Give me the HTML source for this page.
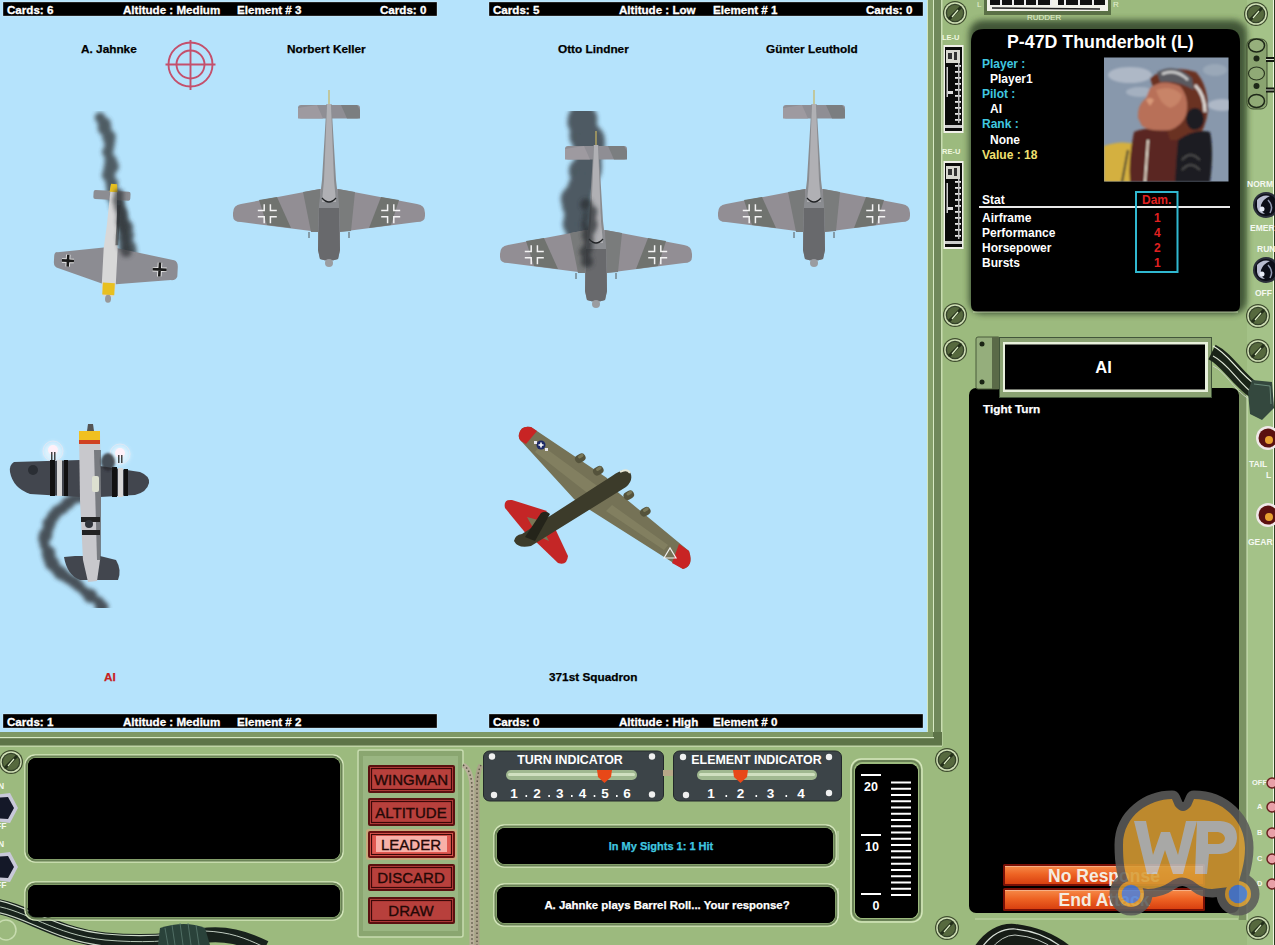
<!DOCTYPE html>
<html><head><meta charset="utf-8">
<style>
*{margin:0;padding:0;box-sizing:border-box}
html,body{width:1275px;height:945px;overflow:hidden;background:#9cba7e;font-family:"Liberation Sans",sans-serif}
svg{position:absolute;left:0;top:0}
text{font-family:"Liberation Sans",sans-serif}
</style></head><body>
<svg width="1275" height="945" viewBox="0 0 1275 945">
<defs>
  <g id="screw">
    <circle r="12" fill="#3e4c2e"/>
    <circle r="10.8" fill="#d0e0b6"/>
    <circle r="9.3" fill="#34422a"/>
    <circle r="8" fill="#56693e"/>
    <path d="M-6 6 L6 -6" stroke="#24301a" stroke-width="3"/>
    <path d="M-3 4 L3 -3" stroke="#e0f0c8" stroke-width="1.2"/>
  </g>
  <filter id="blur2" x="-50%" y="-50%" width="200%" height="200%"><feGaussianBlur stdDeviation="2"/></filter>
  <filter id="blur3" x="-50%" y="-50%" width="200%" height="200%"><feGaussianBlur stdDeviation="3"/></filter>
  <filter id="blur1" x="-50%" y="-50%" width="200%" height="200%"><feGaussianBlur stdDeviation="1"/></filter>
</defs>

<!-- base green -->
<rect x="0" y="0" width="1275" height="945" fill="#9cba7e"/>
<rect x="1247" y="0" width="28" height="945" fill="#a4c288"/>

<!-- sky -->
<rect x="0" y="0" width="927" height="732" fill="#b5e3fc"/>

<!-- frame strips right -->
<rect x="927" y="0" width="15" height="746" fill="#70885a"/>
<rect x="927" y="0" width="6" height="737" fill="#86a06a"/>
<rect x="927" y="0" width="1" height="732" fill="#d4e6c0"/>
<rect x="933" y="0" width="1" height="738" fill="#d8eac4"/>
<rect x="941" y="0" width="1.5" height="746" fill="#c8dcb0"/>
<!-- frame strips bottom -->
<rect x="0" y="732" width="942" height="14" fill="#5e7448"/>
<rect x="0" y="732" width="933" height="5" fill="#7e9864"/>
<rect x="0" y="737" width="934" height="1.2" fill="#d8eac4"/>
<rect x="0" y="745.5" width="942" height="1.5" fill="#c0d4a6"/>
<!-- right-edge channel -->
<rect x="1239" y="390" width="8" height="530" fill="#7a9262"/>
<rect x="1246.5" y="390" width="1" height="530" fill="#d6e8c0"/>
<rect x="1273" y="0" width="1" height="945" fill="#eef6e0"/>
<rect x="1274" y="0" width="1" height="945" fill="#2a3a20"/>

<!-- black panels right -->
<rect x="969" y="20" width="278" height="294" rx="14" fill="#33452a" opacity="0.85" filter="url(#blur3)"/>
<path d="M984 29 L1227 29 Q1240 29 1240 42 L1240 305 Q1240 312 1233 312 L978 312 Q971 312 971 305 L971 42 Q971 29 984 29Z" fill="#000"/>
<path d="M973 312 L1238 312" stroke="#d0e2b8" stroke-width="1.2" opacity="0.8"/>
<rect x="969" y="388" width="270" height="525" rx="7" fill="#000"/>

<!-- bottom black boxes -->
<rect x="28" y="758" width="312" height="101" rx="8" fill="#000"/>
<rect x="28" y="885" width="312" height="32" rx="8" fill="#000"/>
<rect x="497" y="828" width="336" height="36" rx="8" fill="#000"/>
<rect x="497" y="887" width="338" height="36" rx="8" fill="#000"/>
<rect x="855" y="764" width="63" height="154" rx="8" fill="#000"/>

<!-- screws -->
<use href="#screw" x="955" y="13"/>
<use href="#screw" x="1256" y="14"/>
<use href="#screw" x="955" y="315"/>
<use href="#screw" x="955" y="350"/>
<use href="#screw" x="1258" y="316"/>
<use href="#screw" x="1258" y="351"/>
<use href="#screw" x="947" y="760"/>
<use href="#screw" x="947" y="928"/>
<use href="#screw" x="1258" y="928"/>
<use href="#screw" x="11" y="762"/>


<!-- ===== PLANES ===== -->
<defs>
  <g id="fw190">
    <line x1="0" y1="0" x2="0" y2="16" stroke="#c8b460" stroke-width="1.2"/>
    <path d="M-28 15 L28 15 Q31 15 31 18 L31 26 Q31 28.5 28 28.5 L-28 28.5 Q-31 28.5 -31 26 L-31 18 Q-31 15 -28 15Z" fill="#8f8e94"/>
    <path d="M-31 18 L-12 15 L-6 28.5 L-31 28.5Z" fill="#9e9aa0"/>
    <path d="M12 15 L28 15 L31 20 L31 28.5 L18 28.5Z" fill="#7b7e80"/>
    <path d="M-96 123 Q-96 115 -88 114 L-9 99 L9 99 L88 114 Q96 115 96 123 L96 126 Q96 132 88 132 L10 142 L-10 142 L-88 132 Q-96 132 -96 126Z" fill="#928e94"/>
    <path d="M-70 110 L-52 107 L-38 138 L-62 135 Z" fill="#70736f"/>
    <path d="M-26 102 L-9 99 L-9 142 L-18 142Z" fill="#787a7a"/>
    <path d="M52 107 L70 110 L62 135 L40 138Z" fill="#70736f"/>
    <path d="M9 99 L26 102 L22 141 L10 142Z" fill="#7a7c7c"/>
    <path d="M-2.5 14 L2.5 14 L4 40 L7 90 L10 115 L11 135 L11 160 L9 169 Q0 172 -9 169 L-11 160 L-11 135 L-10 115 L-7 90 L-4 40Z" fill="#8a8c90"/>
    <path d="M-2 14 L2 14 L3 40 L5 90 L7 112 L-7 112 L-5 90 L-3 40Z" fill="#b0b0b4"/>
    <path d="M-7 108 Q0 116 7 108" stroke="#202224" stroke-width="1.3" fill="none"/>
    <path d="M-10 118 L10 118 L11 160 L9 169 Q0 172 -9 169 L-11 160Z" fill="#68696c"/>
    <ellipse cx="0" cy="173" rx="4" ry="4" fill="#9a9ca0"/>
    <path d="M-64.8 114.2 L-64.8 120.60000000000001 L-71.2 120.60000000000001 M-58.6 114.2 L-58.6 120.60000000000001 L-52.2 120.60000000000001 M-64.8 133.2 L-64.8 126.8 L-71.2 126.8 M-58.6 133.2 L-58.6 126.8 L-52.2 126.8 M58.6 114.2 L58.6 120.60000000000001 L52.2 120.60000000000001 M64.8 114.2 L64.8 120.60000000000001 L71.2 120.60000000000001 M58.6 133.2 L58.6 126.8 L52.2 126.8 M64.8 133.2 L64.8 126.8 L71.2 126.8" stroke="#f4f4f4" stroke-width="1.5" fill="none"/>
    <line x1="-20" y1="142" x2="-20" y2="148" stroke="#555" stroke-width="1"/>
    <line x1="20" y1="142" x2="20" y2="148" stroke="#555" stroke-width="1"/>
  </g>
</defs>

<!-- smoke Lindner -->
<clipPath id="clipL"><rect x="540" y="111" width="100" height="170"/></clipPath><g clip-path="url(#clipL)"><g fill="#34383c" opacity="0.8" filter="url(#blur2)"><circle cx="582.6" cy="119.2" r="14.7"/><circle cx="580.6" cy="122.3" r="13.2"/><circle cx="582.2" cy="128.2" r="11.3"/><circle cx="585.2" cy="124.7" r="11.5"/><circle cx="586.7" cy="137.0" r="11.5"/><circle cx="585.1" cy="135.4" r="15.7"/><circle cx="589.1" cy="139.7" r="15.6"/><circle cx="584.9" cy="143.4" r="12.2"/><circle cx="586.2" cy="143.7" r="12.1"/><circle cx="591.6" cy="144.2" r="13.4"/><circle cx="590.1" cy="151.9" r="13.0"/><circle cx="585.5" cy="149.4" r="11.4"/><circle cx="589.8" cy="158.6" r="11.7"/><circle cx="589.0" cy="158.8" r="11.6"/><circle cx="589.4" cy="166.9" r="11.1"/><circle cx="587.6" cy="165.5" r="14.1"/><circle cx="587.1" cy="169.8" r="14.3"/><circle cx="582.2" cy="170.9" r="13.3"/><circle cx="580.3" cy="177.6" r="9.8"/><circle cx="584.5" cy="179.8" r="12.2"/><circle cx="584.0" cy="182.4" r="12.5"/><circle cx="581.7" cy="184.5" r="11.5"/><circle cx="581.6" cy="193.7" r="11.3"/><circle cx="580.2" cy="186.6" r="12.3"/><circle cx="578.4" cy="200.2" r="12.6"/><circle cx="575.5" cy="195.4" r="11.9"/><circle cx="572.1" cy="202.2" r="9.6"/><circle cx="572.9" cy="198.9" r="12.1"/><circle cx="572.4" cy="206.6" r="10.3"/><circle cx="578.3" cy="205.3" r="10.6"/><circle cx="575.8" cy="217.9" r="11.8"/><circle cx="578.3" cy="213.1" r="10.2"/><circle cx="574.9" cy="224.1" r="12.1"/><circle cx="573.3" cy="218.5" r="9.3"/><circle cx="575.2" cy="227.1" r="10.5"/><circle cx="575.4" cy="223.3" r="9.8"/><circle cx="577.8" cy="234.0" r="11.6"/><circle cx="580.4" cy="233.6" r="10.4"/><circle cx="582.1" cy="236.1" r="11.2"/><circle cx="582.9" cy="242.6" r="10.8"/><circle cx="581.6" cy="245.0" r="8.0"/><circle cx="583.5" cy="242.3" r="7.9"/><circle cx="581.6" cy="249.3" r="8.7"/><circle cx="580.4" cy="248.0" r="8.0"/></g></g>
<use href="#fw190" x="329" y="90"/>
<use href="#fw190" x="814" y="90"/>
<use href="#fw190" x="596" y="131"/>
<!-- smoke over Lindner fuselage -->
<g fill="#2a2e32" opacity="0.75" filter="url(#blur2)"><circle cx="586.4" cy="204.5" r="6.1"/><circle cx="591.1" cy="211.6" r="6.2"/><circle cx="589.7" cy="216.6" r="6.6"/><circle cx="589.5" cy="224.7" r="8.0"/><circle cx="590.2" cy="229.4" r="5.5"/><circle cx="587.5" cy="234.9" r="5.8"/><circle cx="588.7" cy="240.3" r="5.1"/><circle cx="587.8" cy="247.9" r="5.2"/><circle cx="585.3" cy="252.0" r="5.8"/><circle cx="587.0" cy="261.5" r="6.0"/></g>

<!-- Bf109 Jahnke -->
<clipPath id="clipJ"><rect x="60" y="111" width="100" height="160"/></clipPath><g clip-path="url(#clipJ)"><g fill="#363a3e" opacity="0.8" filter="url(#blur2)"><circle cx="100.0" cy="117.5" r="5.3"/><circle cx="104.3" cy="124.0" r="6.7"/><circle cx="104.6" cy="128.5" r="6.8"/><circle cx="109.0" cy="136.9" r="6.8"/><circle cx="109.6" cy="142.3" r="5.5"/><circle cx="109.3" cy="146.6" r="5.1"/><circle cx="107.8" cy="152.1" r="5.7"/><circle cx="110.6" cy="160.6" r="6.2"/><circle cx="111.5" cy="166.6" r="7.4"/><circle cx="109.1" cy="169.3" r="5.7"/><circle cx="108.6" cy="175.1" r="6.7"/><circle cx="111.8" cy="183.4" r="6.4"/><circle cx="111.7" cy="189.1" r="5.5"/><circle cx="113.0" cy="195.4" r="7.2"/><circle cx="115.1" cy="199.5" r="5.8"/><circle cx="117.3" cy="204.7" r="7.4"/><circle cx="120.2" cy="210.8" r="6.4"/><circle cx="122.3" cy="217.9" r="5.9"/><circle cx="121.1" cy="221.5" r="7.8"/><circle cx="125.6" cy="227.3" r="7.6"/><circle cx="127.7" cy="235.2" r="6.4"/><circle cx="126.8" cy="238.9" r="5.6"/><circle cx="129.0" cy="246.8" r="7.0"/><circle cx="129.0" cy="251.7" r="7.9"/></g></g>
<g transform="translate(114 185) rotate(3)">
  <rect x="-20" y="6" width="37" height="9" rx="2" fill="#8c8d92"/>
  <path d="M-53 70 L-7 63 L7 63 L64 72 Q68 73 68 79 L68 88 Q67 92 62 92 L7 99 L-7 99 L-51 86 Q-56 85 -56 80 L-56 74 Q-56 70 -53 70Z" fill="#8c8c92"/>
  <path d="M-3 0 L3 0 L5 40 L7 64 L7 100 L5 112 L-5 112 L-7 100 L-7 64 L-5 40Z" fill="#d8d8d8"/>
  <path d="M-3 -1 L3 -1 L4 7 L-4 7Z" fill="#e8c020"/>
  <path d="M-6 98 L6 98 L6 110 L-6 110Z" fill="#e8c020"/>
  <ellipse cx="0" cy="114" rx="3" ry="4" fill="#999"/>
  <g stroke="#e8e8e8" stroke-width="4.5"><path d="M-42 72 L-42 84 M-48 78 L-36 78"/><path d="M50 75 L50 89 M43 82 L57 82"/></g><g stroke="#1a1a1a" stroke-width="2.6"><path d="M-42 72 L-42 84 M-48 78 L-36 78"/><path d="M50 75 L50 89 M43 82 L57 82"/></g>
  <path d="M6 20 L6 60" stroke="#333" stroke-width="3" opacity="0.6"/>
</g>
<g fill="#2e3236" opacity="0.7" filter="url(#blur2)"><circle cx="119.0" cy="194.1" r="5.0"/><circle cx="118.3" cy="200.6" r="5.7"/><circle cx="119.1" cy="207.4" r="4.8"/><circle cx="121.9" cy="213.6" r="5.5"/><circle cx="121.8" cy="221.5" r="5.4"/><circle cx="123.7" cy="226.7" r="5.6"/><circle cx="123.4" cy="231.6" r="5.4"/><circle cx="123.3" cy="237.8" r="6.2"/><circle cx="124.1" cy="245.6" r="6.0"/><circle cx="126.2" cy="251.5" r="5.6"/></g>

<!-- P-47 -->
<clipPath id="clipP"><rect x="0" y="490" width="200" height="118"/></clipPath><g clip-path="url(#clipP)"><g fill="#34383c" opacity="0.85" filter="url(#blur2)"><circle cx="80.2" cy="497.9" r="5.1"/><circle cx="73.6" cy="498.8" r="5.5"/><circle cx="68.1" cy="503.0" r="6.2"/><circle cx="62.5" cy="508.2" r="5.9"/><circle cx="57.2" cy="511.5" r="6.0"/><circle cx="53.2" cy="516.4" r="6.1"/><circle cx="49.2" cy="523.3" r="6.5"/><circle cx="48.0" cy="529.1" r="5.5"/><circle cx="45.6" cy="535.1" r="6.8"/><circle cx="44.0" cy="538.7" r="5.9"/><circle cx="44.6" cy="545.2" r="5.0"/><circle cx="48.5" cy="552.9" r="6.9"/><circle cx="49.2" cy="557.8" r="6.4"/><circle cx="52.0" cy="563.2" r="7.1"/><circle cx="55.6" cy="568.1" r="5.8"/><circle cx="60.3" cy="572.7" r="6.8"/><circle cx="63.7" cy="575.3" r="6.0"/><circle cx="68.8" cy="578.7" r="5.6"/><circle cx="74.7" cy="582.2" r="6.1"/><circle cx="78.8" cy="586.0" r="5.6"/><circle cx="84.2" cy="591.3" r="5.0"/><circle cx="90.2" cy="595.8" r="7.1"/><circle cx="92.2" cy="598.0" r="5.0"/><circle cx="98.7" cy="601.6" r="5.2"/><circle cx="101.8" cy="607.2" r="6.7"/></g></g>
<g>
  <circle cx="53" cy="452" r="10" fill="#fff" opacity="0.55" filter="url(#blur2)"/>
  <circle cx="120" cy="455" r="10" fill="#fff" opacity="0.55" filter="url(#blur2)"/>
  <circle cx="53" cy="451" r="10" fill="none" stroke="#f0e8f0" stroke-width="1" opacity="0.6"/>
  <circle cx="120" cy="454" r="10" fill="none" stroke="#f0e8f0" stroke-width="1" opacity="0.6"/>
  <circle cx="53" cy="450" r="5" fill="#fff0f8"/>
  <circle cx="120" cy="453" r="5" fill="#fff0f8"/>
  <rect x="51" y="452" width="1.5" height="8" fill="#444"/><rect x="54" y="452" width="1.5" height="8" fill="#444"/>
  <rect x="118" y="455" width="1.5" height="8" fill="#444"/><rect x="121" y="455" width="1.5" height="8" fill="#444"/>
  <path d="M14 462 Q9 465 10 472 Q13 488 30 494 L80 497 L80 460Z" fill="#42464e"/>
  <path d="M100 466 L140 472 Q150 476 149 483 Q147 492 135 495 L100 497Z" fill="#42464e"/>
  <g fill="#111"><rect x="50" y="460" width="5" height="36"/><rect x="64" y="460" width="4" height="36"/><rect x="112" y="467" width="5" height="30"/><rect x="124" y="469" width="4" height="27"/></g>
  <g fill="#d8d8d8"><rect x="57" y="460" width="5" height="36"/><rect x="118" y="468" width="5" height="29"/></g>
  <circle cx="33" cy="470" r="5" fill="#2a2e34"/>
  <path d="M64 557 Q67 575 80 580 L118 580 Q122 570 116 560 L100 556 L75 556Z" fill="#42464e"/>
  <path d="M79 433 L100 433 L101 500 L100 560 L97 581 L88 582 L83 560 L80 500Z" fill="#c8c8cc"/>
  <path d="M94 450 L101 450 L101 560 L97 560Z" fill="#555a60" opacity="0.7"/>
  <rect x="79" y="431" width="21" height="9" fill="#f0c020"/>
  <rect x="79" y="440" width="21" height="4" fill="#d04020"/>
  <path d="M88 424 L93 424 L94 431 L87 431Z" fill="#555"/>
  <rect x="81" y="517" width="19" height="5" fill="#222"/>
  <rect x="82" y="530" width="18" height="5" fill="#222"/>
  <circle cx="89" cy="524" r="4" fill="#30343a"/>
  <rect x="92" y="476" width="7" height="16" rx="2" fill="#dde0d0"/>
  <ellipse cx="108" cy="462" rx="7" ry="9" fill="#2a2a2e" opacity="0.8" filter="url(#blur1)"/>
</g>

<!-- B-17 -->
<g>
  <path d="M519 434 Q521 425 531 427 L607 478 L614 489 L689 551 Q694 566 683 569 L590 510 L574 499 L521 441 Q518 438 519 434Z" fill="#757256"/>
  <path d="M541 445 L600 488 L590 495 L535 452Z" fill="#8a8868" opacity="0.6"/>
  <path d="M612 505 L668 545 L664 550 L606 511Z" fill="#8a8868" opacity="0.6"/>
  <path d="M519 434 Q521 425 531 427 L537 431 L526 444 L521 441 Q518 438 519 434Z" fill="#c82424"/>
  <path d="M679 544 L689 551 Q694 566 683 569 L672 563Z" fill="#c82424"/>
  <path d="M547 511 L512 500 Q503 499 505 508 L528 536 Z" fill="#c42626"/>
  <path d="M538 520 L527 517 L533 528Z" fill="#7a7656"/>
  <path d="M552 522 L568 556 Q567 566 558 563 L531 537 Z" fill="#c42626"/>
  <path d="M543 530 L549 541 L540 537Z" fill="#7a7656"/>
  <path d="M514 541 Q515 535 522 534 L612 476 Q624 467 630 472 Q634 480 626 487 L531 546 Q518 549 514 541Z" fill="#3c3b2a"/>
  <path d="M620 472 Q627 468 630 473" stroke="#e8e8d8" stroke-width="2" fill="none"/>
  <path d="M525 537 L541 513 Q546 510 550 514 L535 541Z" fill="#24241a"/>
  <g transform="translate(579 459) rotate(-31)"><rect x="-4" y="-4" width="11" height="8" rx="4" fill="#55533c"/><rect x="0" y="-3" width="6" height="3" rx="1.5" fill="#7a7858"/></g><g transform="translate(597 471.5) rotate(-31)"><rect x="-4" y="-4" width="11" height="8" rx="4" fill="#55533c"/><rect x="0" y="-3" width="6" height="3" rx="1.5" fill="#7a7858"/></g><g transform="translate(627.5 496) rotate(-31)"><rect x="-4" y="-4" width="11" height="8" rx="4" fill="#55533c"/><rect x="0" y="-3" width="6" height="3" rx="1.5" fill="#7a7858"/></g><g transform="translate(644 512.5) rotate(-31)"><rect x="-4" y="-4" width="11" height="8" rx="4" fill="#55533c"/><rect x="0" y="-3" width="6" height="3" rx="1.5" fill="#7a7858"/></g>
  <circle cx="541" cy="445" r="4.5" fill="#1e2a66"/>
  <rect x="534" y="441" width="3" height="3" fill="#e8e8f0"/>
  <rect x="545" y="448" width="3" height="3" fill="#e8e8f0"/>
  <path d="M538.5 445 L543.5 445 M541 442.5 L541 447.5" stroke="#fff" stroke-width="1.6"/>
  <path d="M664 558 L670 548 L676 558Z" fill="none" stroke="#f0f0f0" stroke-width="1.2"/>
</g>

<!-- crosshair -->
<g stroke="#c4506c" stroke-width="1.9" fill="none">
  <circle cx="190.5" cy="64.5" r="22"/>
  <circle cx="190.5" cy="64.5" r="14"/>
  <path d="M190.5 40 L190.5 90 M165.5 64.5 L215.5 64.5"/>
</g>


<!-- ===== RIGHT PANEL CONTENT ===== -->
<!-- rudder gauge -->
<rect x="984" y="0" width="127" height="15" fill="#5a7046"/>
<rect x="987" y="0" width="121" height="11" fill="#f2f2ea"/>
<rect x="990" y="0" width="115" height="5" fill="#111"/>
<rect x="1050" y="0" width="8" height="9" fill="#f2f2ea"/>
<g fill="#eee"><rect x="1000" y="0" width="2" height="5"/><rect x="1012" y="0" width="2" height="5"/><rect x="1024" y="0" width="2" height="5"/><rect x="1036" y="0" width="2" height="5"/><rect x="1050" y="0" width="2" height="5"/><rect x="1064" y="0" width="2" height="5"/><rect x="1078" y="0" width="2" height="5"/><rect x="1092" y="0" width="2" height="5"/></g>
<path d="M992 8 L1100 9" stroke="#222" stroke-width="1.5"/>
<g font-size="8" fill="#e4f2d0" font-weight="normal">
  <text x="1027" y="19.5">RUDDER</text>
  <text x="1113" y="7">R</text>
  <text x="977" y="7">L</text>
  <text x="942" y="40" font-size="7.5" fill="#f0f8e0" font-weight="bold">LE-U</text>
  <text x="942" y="154" font-size="7.5" fill="#f0f8e0" font-weight="bold">RE-U</text>
</g>
<!-- LE-U / RE-U gauges -->
<rect x="943.5" y="45" width="20" height="88" fill="#f0f0e8"/>
<rect x="945" y="47" width="17" height="84" fill="#0a0a0a"/>
<rect x="946" y="50" width="14" height="13" fill="#d8d8d0"/>
<rect x="948" y="53" width="4" height="6" fill="#333"/>
<rect x="954" y="52" width="3" height="8" fill="#333"/>
<rect x="946.5" y="67" width="1.5" height="30" fill="#ccc"/>
<rect x="948" y="91" width="5" height="3" fill="#ddd"/>
<rect x="945" y="125" width="17" height="3" fill="#ccc"/>
<g fill="#e8e8e8"><rect x="955" y="65" width="6" height="1.8"/><rect x="955" y="71" width="6" height="1.8"/><rect x="955" y="77" width="6" height="1.8"/><rect x="955" y="83" width="6" height="1.8"/><rect x="955" y="89" width="6" height="1.8"/><rect x="955" y="95" width="6" height="1.8"/><rect x="955" y="101" width="6" height="1.8"/><rect x="955" y="107" width="6" height="1.8"/><rect x="955" y="113" width="6" height="1.8"/><rect x="955" y="119" width="6" height="1.8"/></g>
<rect x="958" y="63" width="1.5" height="60" fill="#bbb"/>
<rect x="943.5" y="161" width="20" height="88" fill="#f0f0e8"/>
<rect x="945" y="163" width="17" height="84" fill="#0a0a0a"/>
<rect x="946" y="166" width="14" height="13" fill="#d8d8d0"/>
<rect x="948" y="169" width="4" height="6" fill="#333"/>
<rect x="954" y="168" width="3" height="8" fill="#333"/>
<rect x="946.5" y="183" width="1.5" height="30" fill="#ccc"/>
<rect x="948" y="207" width="5" height="3" fill="#ddd"/>
<rect x="945" y="241" width="17" height="3" fill="#ccc"/>
<g fill="#e8e8e8"><rect x="955" y="181" width="6" height="1.8"/><rect x="955" y="187" width="6" height="1.8"/><rect x="955" y="193" width="6" height="1.8"/><rect x="955" y="199" width="6" height="1.8"/><rect x="955" y="205" width="6" height="1.8"/><rect x="955" y="211" width="6" height="1.8"/><rect x="955" y="217" width="6" height="1.8"/><rect x="955" y="223" width="6" height="1.8"/><rect x="955" y="229" width="6" height="1.8"/><rect x="955" y="235" width="6" height="1.8"/></g>
<rect x="958" y="179" width="1.5" height="60" fill="#bbb"/>
<!-- right edge switches -->
<g>
  <rect x="1247" y="39" width="20" height="70" rx="6" fill="#8aa470" stroke="#2e3a22" stroke-width="0.8"/>
  <ellipse cx="1256.5" cy="45.5" rx="8" ry="6.5" fill="#96b07c" stroke="#1e2818" stroke-width="1.5"/>
  <ellipse cx="1256.5" cy="73.5" rx="8" ry="6.5" fill="#90aa76" stroke="#2a3620" stroke-width="1.2"/>
  <ellipse cx="1256.5" cy="101" rx="8" ry="6.5" fill="#90aa76" stroke="#1e2818" stroke-width="1.5"/>
  <circle cx="1256.5" cy="58.5" r="3" fill="#1e2818"/>
  <circle cx="1256.5" cy="86" r="3" fill="#1e2818"/>
  <rect x="1266" y="57" width="8" height="5" fill="#141810"/>
  <rect x="1266" y="59" width="8" height="1" fill="#d8e0d0"/>
  <rect x="1266" y="87.5" width="8" height="5" fill="#141810"/>
  <rect x="1266" y="89.5" width="8" height="1" fill="#d8e0d0"/>
</g>
<g font-size="8.5" fill="#f4f8f0" font-weight="bold">
  <text x="1247" y="187">NORM</text>
  <text x="1250" y="231">EMER</text>
  <text x="1257" y="252">RUN</text>
  <text x="1255" y="296">OFF</text>
  <text x="1249" y="467">TAIL</text>
  <text x="1266" y="478">L</text>
  <text x="1248" y="545">GEAR</text>
  <text x="1252" y="785" font-size="7.5">OFF</text>
  <text x="1257" y="809" font-size="7.5">A</text>
  <text x="1257" y="835" font-size="7.5">B</text>
  <text x="1257" y="861" font-size="7.5">C</text>
  <text x="1257" y="886" font-size="7.5">D</text>
</g>
<g>
  <circle cx="1266" cy="205" r="13" fill="#2a2e3a"/>
  <circle cx="1266" cy="205" r="11" fill="#0c0e18"/>
  <path d="M1257 200 Q1262 194 1270 196 Q1263 199 1261 205 Q1260 211 1265 214 Q1258 214 1257 207Z" fill="#b8bcd0"/><path d="M1268 200 Q1274 206 1270 213" stroke="#9098b0" stroke-width="1.5" fill="none"/>
  <circle cx="1262" cy="209" r="2.5" fill="#e8ecf8"/>
  <circle cx="1266" cy="270" r="13" fill="#2a2e3a"/>
  <circle cx="1266" cy="270" r="11" fill="#0c0e18"/>
  <path d="M1257 265 Q1262 259 1270 261 Q1263 264 1261 270 Q1260 276 1265 279 Q1258 279 1257 272Z" fill="#b8bcd0"/><path d="M1268 265 Q1274 271 1270 278" stroke="#9098b0" stroke-width="1.5" fill="none"/>
  <circle cx="1262" cy="274" r="2.5" fill="#e8ecf8"/>
  <circle cx="1268" cy="438" r="12" fill="#f0e8e8"/>
  <circle cx="1268" cy="438" r="9.5" fill="#5a1010"/>
  <circle cx="1269" cy="440" r="4" fill="#e8a030"/>
  <circle cx="1268" cy="515" r="12" fill="#f0e8e8"/>
  <circle cx="1268" cy="515" r="9.5" fill="#5a1010"/>
  <circle cx="1269" cy="517" r="4" fill="#e8a030"/>
  <g fill="#e8a0a8" stroke="#6a2020" stroke-width="1.5">
    <circle cx="1272" cy="783" r="5"/><circle cx="1272" cy="807" r="5"/><circle cx="1272" cy="833" r="5"/><circle cx="1272" cy="859" r="5"/><circle cx="1272" cy="884" r="5"/>
  </g>
</g>

<!-- card info -->
<g font-weight="bold" font-size="12">
  <text x="1007" y="47.5" font-size="17.8" fill="#fff">P-47D Thunderbolt (L)</text>
  <text x="982" y="68" fill="#40c8e0">Player :</text>
  <text x="990" y="83" fill="#fff">Player1</text>
  <text x="982" y="98" fill="#40c8e0">Pilot :</text>
  <text x="990" y="113" fill="#fff">AI</text>
  <text x="982" y="128" fill="#40c8e0">Rank :</text>
  <text x="990" y="143.5" fill="#fff">None</text>
  <text x="982" y="158.5" fill="#f0e070">Value : 18</text>
  <text x="982" y="204" fill="#fff">Stat</text>
  <text x="1142" y="204" fill="#e02020">Dam.</text>
  <text x="982" y="222" fill="#fff">Airframe</text>
  <text x="982" y="237" fill="#fff">Performance</text>
  <text x="982" y="252" fill="#fff">Horsepower</text>
  <text x="982" y="267" fill="#fff">Bursts</text>
  <text x="1154" y="222" fill="#e02020">1</text>
  <text x="1154" y="237" fill="#e02020">4</text>
  <text x="1154" y="252" fill="#e02020">2</text>
  <text x="1154" y="267" fill="#e02020">1</text>
</g>
<rect x="979" y="206" width="251" height="2" fill="#e8e8e8"/>
<rect x="1136" y="192" width="41.5" height="80" fill="none" stroke="#30b8d0" stroke-width="2"/>

<!-- pilot photo -->
<clipPath id="phclip"><rect x="1104" y="57.5" width="124.5" height="124"/></clipPath>
<rect x="1104" y="57.5" width="124.5" height="124" fill="#8898ac"/>
<g clip-path="url(#phclip)">
  <g filter="url(#blur1)">
  <ellipse cx="1130" cy="75" rx="22" ry="8" fill="#aeb8c6"/>
  <ellipse cx="1140" cy="92" rx="14" ry="5" fill="#a4b0c0"/>
  <ellipse cx="1222" cy="105" rx="14" ry="6" fill="#aeb8c6"/>
  <ellipse cx="1215" cy="70" rx="12" ry="6" fill="#9aa8b8"/>
  <path d="M1104 146 Q1120 140 1135 144 L1150 160 L1178 172 L1182 182 L1104 182Z" fill="#d4b040"/>
  <path d="M1134 132 Q1150 125 1175 130 L1185 150 L1182 182 L1130 182 Q1128 160 1134 132Z" fill="#5a2820"/>
  <path d="M1150 78 Q1170 64 1196 72 Q1208 85 1208 110 Q1206 130 1195 140 L1170 140 Z" fill="#6a3224"/>
  <path d="M1138 118 Q1137 105 1146 98 L1150 88 Q1162 78 1180 86 Q1190 98 1186 115 Q1182 126 1170 130 Q1150 132 1142 126Z" fill="#b87058"/>
  <path d="M1146 100 Q1150 96 1154 100 L1150 106 Z" fill="#d89878"/>
  <path d="M1156 90 Q1172 84 1182 95 Q1180 105 1170 108 Q1160 104 1156 90Z" fill="#c88468"/>
  <path d="M1157 72 Q1175 62 1192 78 L1194 90 Q1178 80 1160 82Z" fill="#5a5a60"/>
  <path d="M1162 74 Q1176 68 1188 80" stroke="#d0d0d0" stroke-width="2.5" fill="none"/>
  <path d="M1195 85 Q1205 95 1205 112" stroke="#e0dcd8" stroke-width="3" fill="none"/>
  <ellipse cx="1195" cy="119" rx="9" ry="11" fill="#1e1e22"/>
  <path d="M1178 140 Q1195 128 1210 132 Q1214 150 1210 182 L1175 182 Q1176 160 1178 140Z" fill="#1c1c20"/>
  <path d="M1182 160 Q1190 150 1200 160 M1182 170 Q1190 160 1200 170" stroke="#555" stroke-width="1.5" fill="none"/>
  <path d="M1148 140 L1145 182" stroke="#e8e0d0" stroke-width="2" fill="none"/>
  <path d="M1128 150 L1122 182" stroke="#3a3a30" stroke-width="2" fill="none"/>
  </g>
</g>

<!-- AI box with bracket -->
<rect x="976" y="337" width="24" height="52" rx="2" fill="#95ae7c" stroke="#4a5c3a" stroke-width="1"/>
<rect x="992" y="337" width="8" height="52" fill="#5a6a48"/>
<circle cx="982" cy="344" r="2.5" fill="#1a2414"/>
<circle cx="982" cy="382" r="2.5" fill="#1a2414"/>
<rect x="999" y="337" width="213" height="61" fill="#42563a"/>
<rect x="1000" y="338" width="211" height="59" fill="#8aa272"/>
<rect x="1003" y="342" width="205" height="50" fill="#e8f0dc"/>
<rect x="1005" y="344.5" width="200" height="45" fill="#000"/>
<text x="1103.5" y="373" font-weight="bold" font-size="16.5" fill="#fff" text-anchor="middle">AI</text>
<!-- cable from AI box -->
<g fill="none">
  <path d="M1212 352 C1228 360 1236 378 1256 392" stroke="#1a2418" stroke-width="16"/>
  <path d="M1213 346 C1229 354 1237 372 1257 386" stroke="#e8f0e0" stroke-width="1.3"/>
  <path d="M1213 356 C1229 364 1237 382 1256 396" stroke="#dce4d4" stroke-width="1.2"/>
  <path d="M1213 366 C1226 372 1232 388 1250 400" stroke="#c8d0c0" stroke-width="1"/>
</g>
<path d="M1252 380 L1272 382 L1274 408 L1262 420 L1250 414 L1248 392Z" fill="#34483e"/>
<path d="M1254 384 L1270 386 L1271 404" stroke="#6a8a7a" stroke-width="1" fill="none"/>
<text x="983" y="413" font-weight="bold" font-size="11.8" fill="#fff" stroke="#fff" stroke-width="0.25">Tight Turn</text>

<!-- response buttons -->
<defs>
  <linearGradient id="og" x1="0" y1="0" x2="0" y2="1">
    <stop offset="0" stop-color="#f68a48"/><stop offset="0.45" stop-color="#ee6424"/><stop offset="1" stop-color="#d84010"/>
  </linearGradient>
</defs>
<g>
  <rect x="1003" y="864" width="202" height="22" rx="1.5" fill="#7a1006"/>
  <rect x="1005" y="866" width="198" height="18" fill="url(#og)"/>
  <rect x="1005" y="866" width="198" height="1" fill="#f8c0a0" opacity="0.7"/>
  <rect x="1003" y="888" width="202" height="23" rx="1.5" fill="#7a1006"/>
  <rect x="1005" y="890" width="198" height="19" fill="url(#og)"/>
  <rect x="1005" y="890" width="198" height="1" fill="#f8c0a0" opacity="0.7"/>
  <text x="1104" y="881.5" text-anchor="middle" font-weight="bold" font-size="17.5" fill="#f4ece0">No Response</text>
  <text x="1104" y="905.5" text-anchor="middle" font-weight="bold" font-size="17.5" fill="#f4ece0">End Attack</text>
</g>


<!-- cable arc under big panel -->
<path d="M972 950 Q990 922 1015 924 Q1050 928 1075 950Z" fill="#161c16"/>
<path d="M980 950 Q995 928 1015 929 Q1045 932 1065 950" fill="none" stroke="#d8e0d8" stroke-width="1.2"/>
<path d="M990 950 Q1002 935 1015 935 Q1040 937 1055 950" fill="none" stroke="#c0c8c0" stroke-width="1"/>
<path d="M975 919 L1238 919" stroke="#d0e2b8" stroke-width="1.2" opacity="0.8"/>
<!-- ===== BOTTOM PANEL ===== -->
<!-- left toggles -->
<g font-size="8.5" fill="#f4f8f0" font-weight="bold">
  <text x="-2" y="789">N</text><text x="-4" y="829">FF</text>
  <text x="-2" y="847">N</text><text x="-4" y="888">FF</text>
</g>
<g>
  <path d="M-6 795 L10 793 L18 808 L10 823 L-6 821Z" fill="#c8c8d8"/>
  <path d="M-6 798 L8 797 L14 808 L8 819 L-6 818Z" fill="#141828"/>
  <path d="M-6 854 L10 852 L18 867 L10 882 L-6 880Z" fill="#c8c8d8"/>
  <path d="M-6 857 L8 856 L14 867 L8 878 L-6 877Z" fill="#141828"/>
</g>
<!-- bottom-left cable -->
<g fill="none" stroke-linecap="butt">
  <path d="M-5 906 C25 910 55 935 105 940 C140 943 170 942 200 936 C225 932 245 938 265 948" stroke="#18221c" stroke-width="15"/>
  <path d="M-5 900 C25 904 55 929 105 934 C140 937 170 936 200 930" stroke="#d0dccc" stroke-width="1.2"/>
  <path d="M-5 906 C25 910 55 935 105 940 C140 943 170 942 200 936" stroke="#b8c8b8" stroke-width="1"/>
  <path d="M-5 912 C25 916 55 941 105 946" stroke="#c8d4c4" stroke-width="1.2"/>
  <path d="M205 931 C230 932 245 938 262 946" stroke="#c0ccc0" stroke-width="1"/>
</g>
<path d="M160 928 Q185 920 205 928 L210 945 L158 945Z" fill="#2a423a"/>
<g stroke="#5a7a70" stroke-width="0.8"><path d="M165 928 L168 945 M172 925 L175 945 M180 923 L183 945 M188 923 L191 945 M196 925 L199 945"/></g>
<circle cx="6" cy="930" r="10" fill="none" stroke="#c8dcb0" stroke-width="1.5"/>
<!-- groove highlights around black boxes -->
<g fill="none" stroke="#d4e6bc" stroke-width="1.5">
  <rect x="25" y="755" width="318" height="107" rx="10"/>
  <rect x="25" y="882" width="318" height="38" rx="10"/>
  <rect x="494" y="825" width="342" height="42" rx="10"/>
  <rect x="494" y="884" width="344" height="42" rx="10"/>
  <rect x="851" y="759" width="71" height="163" rx="10"/>
</g>
<g fill="none" stroke="#6a8256" stroke-width="2">
  <rect x="26.5" y="756.5" width="315" height="104" rx="9"/>
  <rect x="26.5" y="883.5" width="315" height="35" rx="9"/>
  <rect x="495.5" y="826.5" width="339" height="39" rx="9"/>
  <rect x="495.5" y="885.5" width="341" height="39" rx="9"/>
  <rect x="853" y="761" width="67" height="159" rx="9"/>
</g>
<rect x="28" y="758" width="312" height="101" rx="8" fill="#000"/>
<rect x="28" y="885" width="312" height="32" rx="8" fill="#000"/>
<rect x="497" y="828" width="336" height="36" rx="8" fill="#000"/>
<rect x="497" y="887" width="338" height="36" rx="8" fill="#000"/>
<rect x="855" y="764" width="63" height="154" rx="8" fill="#000"/>

<!-- button housing -->
<rect x="358" y="750" width="105" height="187" rx="2" fill="#8aa670"/>
<rect x="358" y="750" width="105" height="187" rx="2" fill="none" stroke="#c8dcb0" stroke-width="1.5"/>
<rect x="363" y="756" width="95" height="175" fill="#9ab682"/>
<g>
  <g id="btns">
  </g>
</g>
<g font-size="15" fill="#240806" text-anchor="middle" stroke-width="0">
  <rect x="368" y="765" width="87" height="28" rx="2" fill="#5a1010"/>
  <rect x="370" y="767" width="83" height="24" fill="#b8403c"/>
  <rect x="371.5" y="768.5" width="80" height="21" fill="none" stroke="#3a0808" stroke-width="1.2"/>
  <text x="411" y="784.5" stroke="#240806" stroke-width="0.35">WINGMAN</text>
  <rect x="368" y="798" width="87" height="28" rx="2" fill="#5a1010"/>
  <rect x="370" y="800" width="83" height="24" fill="#b8403c"/>
  <rect x="371.5" y="801.5" width="80" height="21" fill="none" stroke="#3a0808" stroke-width="1.2"/>
  <text x="411" y="817.5" stroke="#240806" stroke-width="0.35">ALTITUDE</text>
  <rect x="366" y="829" width="91" height="31" rx="3" fill="#e8a078" opacity="0.6"/>
  <rect x="368" y="831" width="87" height="27" rx="2" fill="#6a1010"/>
  <rect x="370" y="833" width="83" height="23" fill="#e05850"/>
  <rect x="376" y="836" width="71" height="16" fill="#f8b0a8"/>
  <rect x="371.5" y="834.5" width="80" height="20" fill="none" stroke="#3a0808" stroke-width="1.2"/>
  <text x="411" y="850" stroke="#240806" stroke-width="0.35">LEADER</text>
  <rect x="368" y="864" width="87" height="27" rx="2" fill="#5a1010"/>
  <rect x="370" y="866" width="83" height="23" fill="#b8403c"/>
  <rect x="371.5" y="867.5" width="80" height="20" fill="none" stroke="#3a0808" stroke-width="1.2"/>
  <text x="411" y="883" stroke="#240806" stroke-width="0.35">DISCARD</text>
  <rect x="368" y="897" width="87" height="27" rx="2" fill="#5a1010"/>
  <rect x="370" y="899" width="83" height="23" fill="#b8403c"/>
  <rect x="371.5" y="900.5" width="80" height="20" fill="none" stroke="#3a0808" stroke-width="1.2"/>
  <text x="411" y="916" stroke="#240806" stroke-width="0.35">DRAW</text>
</g>
<!-- vertical rope cable -->
<g fill="none">
  <path d="M463 765 Q472 770 472 790 L472 945" stroke="#b8b09a" stroke-width="5"/>
  <path d="M481 765 Q477 772 477 790 L477 945" stroke="#aaa28a" stroke-width="5"/>
  <path d="M463 765 Q472 770 472 790 L472 945" stroke="#5a5444" stroke-width="1.5" stroke-dasharray="1.5 2.5"/>
  <path d="M481 765 Q477 772 477 790 L477 945" stroke="#5a5444" stroke-width="1.5" stroke-dasharray="1.5 2.5"/>
</g>
<!-- turn indicator -->
<g>
  <rect x="483.5" y="751" width="180" height="50" rx="6" fill="#3c4448"/>
  <rect x="483.5" y="751" width="180" height="50" rx="6" fill="none" stroke="#22282a" stroke-width="1"/>
  <rect x="506" y="770" width="131" height="10" rx="5" fill="#a0b890"/>
  <rect x="508" y="773" width="127" height="3" rx="1.5" fill="#d0e0c0"/>
  <path d="M597 770 L612 770 L611 777 L604.5 783 L598 777Z" fill="#e84818"/>
  <g fill="#f0f0f0"><circle cx="492" cy="756.5" r="3.2"/><circle cx="652" cy="756.5" r="3.2"/><circle cx="494" cy="795" r="3.2"/><circle cx="652" cy="794.5" r="3.2"/></g>
  <text x="570" y="763.5" text-anchor="middle" font-weight="bold" font-size="12.4" fill="#fff">TURN INDICATOR</text>
  <g font-weight="bold" font-size="13.5" fill="#fff" text-anchor="middle"><text x="514" y="797.5">1</text><text x="537" y="797.5">2</text><text x="559.7" y="797.5">3</text><text x="582.5" y="797.5">4</text><text x="605" y="797.5">5</text><text x="627" y="797.5">6</text><rect x="525.5" y="795" width="1.6" height="2"/><rect x="548.3" y="795" width="1.6" height="2"/><rect x="571.0" y="795" width="1.6" height="2"/><rect x="593.7" y="795" width="1.6" height="2"/><rect x="616.0" y="795" width="1.6" height="2"/></g>
</g>
<rect x="663" y="770" width="11" height="6" fill="#b8a888"/>
<!-- element indicator -->
<g>
  <rect x="673.5" y="751" width="168" height="50" rx="6" fill="#3c4448"/>
  <rect x="673.5" y="751" width="168" height="50" rx="6" fill="none" stroke="#22282a" stroke-width="1"/>
  <rect x="697" y="770" width="120" height="10" rx="5" fill="#a0b890"/>
  <rect x="699" y="773" width="116" height="3" rx="1.5" fill="#d0e0c0"/>
  <path d="M733 770 L748 770 L747 777 L740.5 783 L734 777Z" fill="#e84818"/>
  <g fill="#f0f0f0"><circle cx="683" cy="757" r="3.2"/><circle cx="829" cy="757" r="3.2"/><circle cx="686" cy="795" r="3.2"/><circle cx="829" cy="793" r="3.2"/></g>
  <text x="756.5" y="763.5" text-anchor="middle" font-weight="bold" font-size="12.4" fill="#fff">ELEMENT INDICATOR</text>
  <g font-weight="bold" font-size="13.5" fill="#fff" text-anchor="middle"><text x="711" y="797.5">1</text><text x="740.5" y="797.5">2</text><text x="770.5" y="797.5">3</text><text x="801" y="797.5">4</text><rect x="725.5" y="795" width="1.6" height="2"/><rect x="755.5" y="795" width="1.6" height="2"/><rect x="785.5" y="795" width="1.6" height="2"/></g>
</g>

<!-- gauge -->
<g fill="#fff">
  <rect x="861" y="774" width="20" height="2"/>
  <rect x="861" y="834" width="20" height="2"/>
  <rect x="861" y="893" width="20" height="2"/>
  <g id="ticks"></g>
</g>
<g font-weight="bold" font-size="12.5" fill="#fff" text-anchor="middle">
  <text x="871" y="791">20</text>
  <text x="872" y="850.5">10</text>
  <text x="876" y="909.5">0</text>
</g>
<rect x="891" y="781.50" width="20" height="2" fill="#fff"/><rect x="891" y="787.75" width="20" height="2" fill="#fff"/><rect x="891" y="794.00" width="20" height="2" fill="#fff"/><rect x="891" y="800.25" width="20" height="2" fill="#fff"/><rect x="891" y="806.50" width="20" height="2" fill="#fff"/><rect x="891" y="812.75" width="20" height="2" fill="#fff"/><rect x="891" y="819.00" width="20" height="2" fill="#fff"/><rect x="891" y="825.25" width="20" height="2" fill="#fff"/><rect x="891" y="831.50" width="20" height="2" fill="#fff"/><rect x="891" y="837.75" width="20" height="2" fill="#fff"/><rect x="891" y="844.00" width="20" height="2" fill="#fff"/><rect x="891" y="850.25" width="20" height="2" fill="#fff"/><rect x="891" y="856.50" width="20" height="2" fill="#fff"/><rect x="891" y="862.75" width="20" height="2" fill="#fff"/><rect x="891" y="869.00" width="20" height="2" fill="#fff"/><rect x="891" y="875.25" width="20" height="2" fill="#fff"/><rect x="891" y="881.50" width="20" height="2" fill="#fff"/><rect x="891" y="887.75" width="20" height="2" fill="#fff"/><rect x="891" y="894.00" width="20" height="2" fill="#fff"/>

<!-- message texts -->
<text x="661" y="850" text-anchor="middle" font-weight="bold" font-size="11" fill="#40c8e0" stroke="#40c8e0" stroke-width="0.25">In My Sights 1: 1 Hit</text>
<text x="667" y="909" text-anchor="middle" font-weight="bold" font-size="11.4" fill="#fff" stroke="#fff" stroke-width="0.25">A. Jahnke plays Barrel Roll... Your response?</text>
<path d="M838 831 L838 860 M838 888 L838 918" stroke="#e8f0e0" stroke-width="1" opacity="0.6"/>

<!-- watermark -->
<g opacity="0.88">
  <g stroke="#5c5c5a" stroke-linejoin="round" fill="#5c5c5a">
    <path d="M1123 845 C1123 815 1150 799 1172 799 L1175 806 Q1183 816 1191 806 L1194 799 C1222 799 1245 820 1245 848 C1245 865 1240 875 1238 886 L1212 889 Q1203 889 1197 884 Q1183 872 1170 882 Q1160 889 1148 889 L1131 886 C1124 875 1123 860 1123 845Z" stroke-width="17"/>
    <circle cx="1131" cy="894" r="13" stroke-width="17"/>
    <circle cx="1238" cy="894" r="13" stroke-width="17"/>
  </g>
  <g fill="#d89c34">
    <path d="M1123 845 C1123 815 1150 799 1172 799 L1175 806 Q1183 816 1191 806 L1194 799 C1222 799 1245 820 1245 848 C1245 865 1240 875 1238 886 L1212 889 Q1203 889 1197 884 Q1183 872 1170 882 Q1160 889 1148 889 L1131 886 C1124 875 1123 860 1123 845Z"/>
    <circle cx="1131" cy="894" r="13"/>
    <circle cx="1238" cy="894" r="13"/>
  </g>
  <path d="M1134 821 L1146 821 L1153 855 L1161 832 L1170 832 L1178 855 L1186 821 L1197 821 L1183 874 L1173 874 L1165 850 L1157 874 L1147 874Z" fill="#c0c0be"/>
  <path d="M1197 821 L1220 821 Q1237 822 1237 838 Q1236 853 1220 854 L1209 854 L1207 874 L1195 874Z M1208 832 L1208 844 L1219 844 Q1225 843 1225 838 Q1224 833 1218 832Z" fill="#c0c0be" fill-rule="evenodd"/>
  <circle cx="1131" cy="894" r="9.3" fill="#5080d8"/>
  <circle cx="1238" cy="894" r="9.3" fill="#5080d8"/>
</g>

<!-- TEXT BARS -->
<g font-weight="bold" font-size="11.6" fill="#fff" stroke="#fff" stroke-width="0.3">
  <rect x="3" y="2" width="434" height="14" fill="#000"/>
  <rect x="489" y="2" width="434" height="14" fill="#000"/>
  <rect x="3" y="714" width="434" height="14" fill="#000"/>
  <rect x="489" y="714" width="434" height="14" fill="#000"/>
  <text x="7" y="13.5">Cards: 6</text>
  <text x="123" y="13.5">Altitude : Medium</text>
  <text x="237" y="13.5">Element # 3</text>
  <text x="380" y="13.5">Cards: 0</text>
  <text x="493" y="13.5">Cards: 5</text>
  <text x="619" y="13.5">Altitude : Low</text>
  <text x="713" y="13.5">Element # 1</text>
  <text x="866" y="13.5">Cards: 0</text>
  <text x="7" y="725.5">Cards: 1</text>
  <text x="123" y="725.5">Altitude : Medium</text>
  <text x="237" y="725.5">Element # 2</text>
  <text x="493" y="725.5">Cards: 0</text>
  <text x="619" y="725.5">Altitude : High</text>
  <text x="713" y="725.5">Element # 0</text>
</g>
<g font-weight="bold" font-size="11.8" fill="#000" stroke="#000" stroke-width="0.25">
  <text x="81" y="53">A. Jahnke</text>
  <text x="287" y="53">Norbert Keller</text>
  <text x="558" y="53">Otto Lindner</text>
  <text x="766" y="53">Günter Leuthold</text>
  <text x="104" y="681" fill="#c8201c" stroke="#c8201c">AI</text>
  <text x="549" y="681">371st Squadron</text>
</g>

</svg>
</body></html>
